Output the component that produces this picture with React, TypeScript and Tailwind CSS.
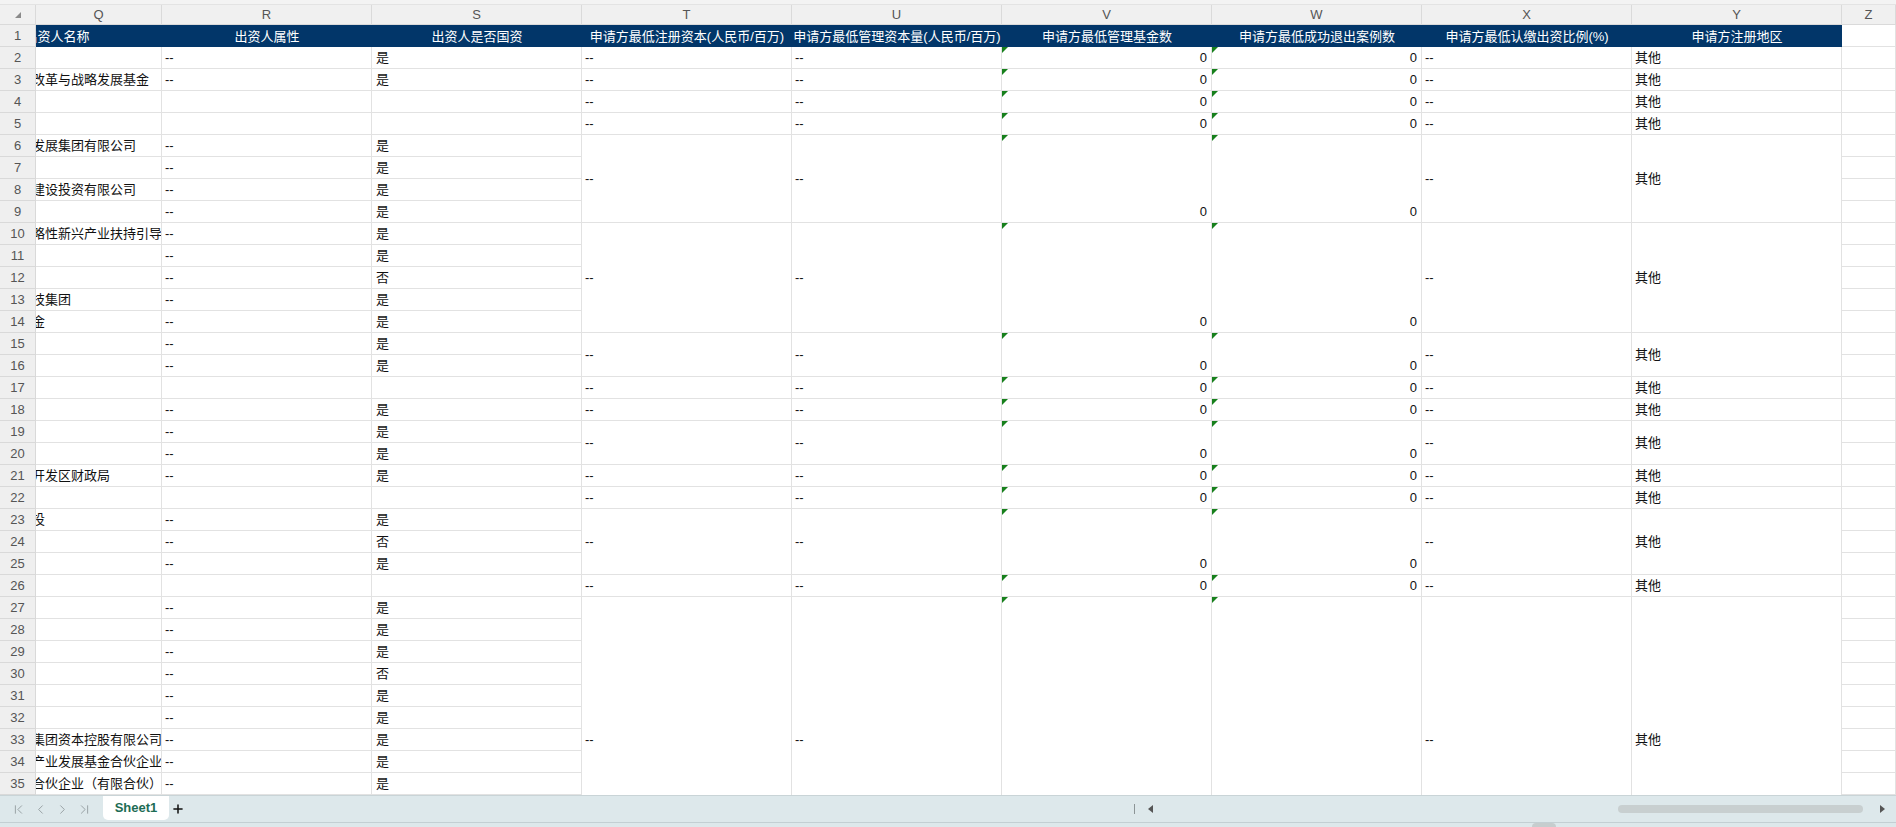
import React from "react";
import { ChevronFirst, ChevronLeft, ChevronRight, ChevronLast, Plus } from "lucide-react";

type Row = {
  n: number;
  q?: string;
  r?: string;
  s?: string;
  span?: number;
};

const rows: Row[] = [
  { n: 2, r: "--", s: "是", span: 1 },
  { n: 3, q: "改革与战略发展基金", r: "--", s: "是", span: 1 },
  { n: 4, span: 1 },
  { n: 5, span: 1 },
  { n: 6, q: "发展集团有限公司", r: "--", s: "是", span: 4 },
  { n: 7, r: "--", s: "是" },
  { n: 8, q: "建设投资有限公司", r: "--", s: "是" },
  { n: 9, r: "--", s: "是" },
  { n: 10, q: "略性新兴产业扶持引导", r: "--", s: "是", span: 5 },
  { n: 11, r: "--", s: "是" },
  { n: 12, r: "--", s: "否" },
  { n: 13, q: "技集团", r: "--", s: "是" },
  { n: 14, q: "金", r: "--", s: "是" },
  { n: 15, r: "--", s: "是", span: 2 },
  { n: 16, r: "--", s: "是" },
  { n: 17, span: 1 },
  { n: 18, r: "--", s: "是", span: 1 },
  { n: 19, r: "--", s: "是", span: 2 },
  { n: 20, r: "--", s: "是" },
  { n: 21, q: "开发区财政局", r: "--", s: "是", span: 1 },
  { n: 22, span: 1 },
  { n: 23, q: "投", r: "--", s: "是", span: 3 },
  { n: 24, r: "--", s: "否" },
  { n: 25, r: "--", s: "是" },
  { n: 26, span: 1 },
  { n: 27, r: "--", s: "是", span: 13 },
  { n: 28, r: "--", s: "是" },
  { n: 29, r: "--", s: "是" },
  { n: 30, r: "--", s: "否" },
  { n: 31, r: "--", s: "是" },
  { n: 32, r: "--", s: "是" },
  { n: 33, q: "集团资本控股有限公司", r: "--", s: "是" },
  { n: 34, q: "产业发展基金合伙企业", r: "--", s: "是" },
  { n: 35, q: "合伙企业（有限合伙）", r: "--", s: "是" },
  { n: 36, r: "--", s: "是" },
  { n: 37, r: "--", s: "是" },
  { n: 38, r: "--", s: "是" },
  { n: 39, r: "--", s: "是" },
];

const spanClass: Record<number, string> = {
  1: "row-span-1",
  2: "row-span-2",
  3: "row-span-3",
  4: "row-span-4",
  5: "row-span-5",
  13: "row-span-13",
};

const letters = ["Q", "R", "S", "T", "U", "V", "W", "X", "Y", "Z"];
const heads = [
  "出资人属性",
  "出资人是否国资",
  "申请方最低注册资本(人民币/百万)",
  "申请方最低管理资本量(人民币/百万)",
  "申请方最低管理基金数",
  "申请方最低成功退出案例数",
  "申请方最低认缴出资比例(%)",
  "申请方注册地区",
];

const cell =
  "flex items-center whitespace-nowrap overflow-hidden border-r border-b border-[#e2e2e2] bg-white text-[13px] leading-none text-[#111]";
const rowHead =
  "col-start-1 flex items-center justify-center border-r border-b border-[#d9d9d9] bg-[#efefef] text-[13px] leading-none text-[#555]";

function Flag() {
  return (
    <div className="absolute top-0 left-0 w-0 h-0 border-t-[6px] border-t-[#17801c] border-r-[6px] border-r-transparent" />
  );
}

function Group({ span }: { span: number }) {
  const sc = spanClass[span];
  return (
    <>
      <div className={`${cell} ${sc} px-[3px]`}>--</div>
      <div className={`${cell} ${sc} px-[3px]`}>--</div>
      <div className={`${cell} ${sc} relative items-end justify-end pr-[4px] pb-[4px]`}>
        <Flag />
        0
      </div>
      <div className={`${cell} ${sc} relative items-end justify-end pr-[4px] pb-[4px]`}>
        <Flag />
        0
      </div>
      <div className={`${cell} ${sc} px-[3px]`}>--</div>
      <div className={`${cell} ${sc} px-[3px]`}>其他</div>
    </>
  );
}

export default function App() {
  return (
    <div className="w-[1896px] h-[827px] flex flex-col overflow-hidden bg-white font-['Liberation_Sans','Noto_Sans_CJK_SC',sans-serif]">
      {/* column letters */}
      <div className="h-[5px] bg-[#f3f3f3] border-b border-[#e3e3e3]" />
      <div className="h-[20px] flex bg-[#f0f0f0] border-b border-[#dadada] text-[13px] text-[#555]">
        <div className="w-[36px] flex items-center justify-center border-r border-[#dadada]">
          <svg width="6" height="6" viewBox="0 0 6 6">
            <path d="M6 0 L6 6 L0 6 Z" fill="#8a8a8a" />
          </svg>
        </div>
        {letters.map((l, i) => (
          <div
            key={l}
            className={`flex items-center justify-center border-r border-[#dadada] ${
              i === 0 ? "w-[126px]" : i === 9 ? "flex-1" : "w-[210px]"
            }`}
          >
            {l}
          </div>
        ))}
      </div>

      {/* sheet body */}
      <div className="h-[770px] overflow-hidden">
        <div className="grid grid-cols-[36px_126px_repeat(8,210px)_54px] auto-rows-[22px]">
          <div className={rowHead}>1</div>
          <div className="flex justify-end items-center overflow-hidden bg-[#023669] text-white text-[13px] leading-none">
            <div className="w-[210px] shrink-0 text-center">出资人名称</div>
          </div>
          {heads.map((h) => (
            <div
              key={h}
              className="flex items-center justify-center whitespace-nowrap overflow-hidden bg-[#023669] text-white text-[13px] leading-none"
            >
              {h}
            </div>
          ))}
          <div className={`${cell} col-start-11`} />

          {rows.map((r) => (
            <React.Fragment key={r.n}>
              <div className={rowHead}>{r.n}</div>
              <div className={`${cell} px-[2px]`}>
                {r.q && <span className="ml-[-6px]">{r.q}</span>}
              </div>
              <div className={`${cell} px-[3px]`}>{r.r}</div>
              <div className={`${cell} px-[4px]`}>{r.s}</div>
              {r.span && <Group span={r.span} />}
              <div className={`${cell} col-start-11`} />
            </React.Fragment>
          ))}
        </div>
      </div>

      {/* sheet tabs */}
      <div className="h-[27px] flex items-stretch bg-[#dde8eb] border-t border-[#c9d4d7]">
        <div className="w-[1130px] flex items-center pl-[7px]">
          <div className="w-[22px] flex justify-center text-[#9aa3a6]">
            <ChevronFirst size={15} strokeWidth={1.6} />
          </div>
          <div className="w-[22px] flex justify-center text-[#9aa3a6]">
            <ChevronLeft size={15} strokeWidth={1.6} />
          </div>
          <div className="w-[22px] flex justify-center text-[#9aa3a6]">
            <ChevronRight size={15} strokeWidth={1.6} />
          </div>
          <div className="w-[22px] flex justify-center text-[#9aa3a6]">
            <ChevronLast size={15} strokeWidth={1.6} />
          </div>
          <div className="ml-[8px] w-[66px] h-[24px] self-start flex items-center justify-center bg-white rounded-b-[5px] text-[13px] font-bold text-[#1d6c54]">
            Sheet1
          </div>
          <div className="w-[18px] flex justify-center text-[#111]">
            <Plus size={14} strokeWidth={2.6} />
          </div>
        </div>
        <div className="flex-1 flex items-center pr-[11px]">
          <div className="ml-[4px] w-[1px] h-[10px] bg-[#8c9496]" />
          <svg className="ml-[13px]" width="5" height="8" viewBox="0 0 5 8">
            <path d="M5 0 L0 4 L5 8 Z" fill="#555" />
          </svg>
          <div className="ml-auto w-[245px] h-[8px] rounded-full bg-[#c8cfd0]" />
          <svg className="ml-[17px]" width="5" height="8" viewBox="0 0 5 8">
            <path d="M0 0 L5 4 L0 8 Z" fill="#555" />
          </svg>
        </div>
      </div>
      <div className="flex-1 flex items-end bg-[#dde8eb] border-t border-[#c3cfd3] pl-[1532px]">
        <div className="w-[24px] h-[4px] rounded-t-full bg-[#c6cdce]" />
      </div>
    </div>
  );
}
